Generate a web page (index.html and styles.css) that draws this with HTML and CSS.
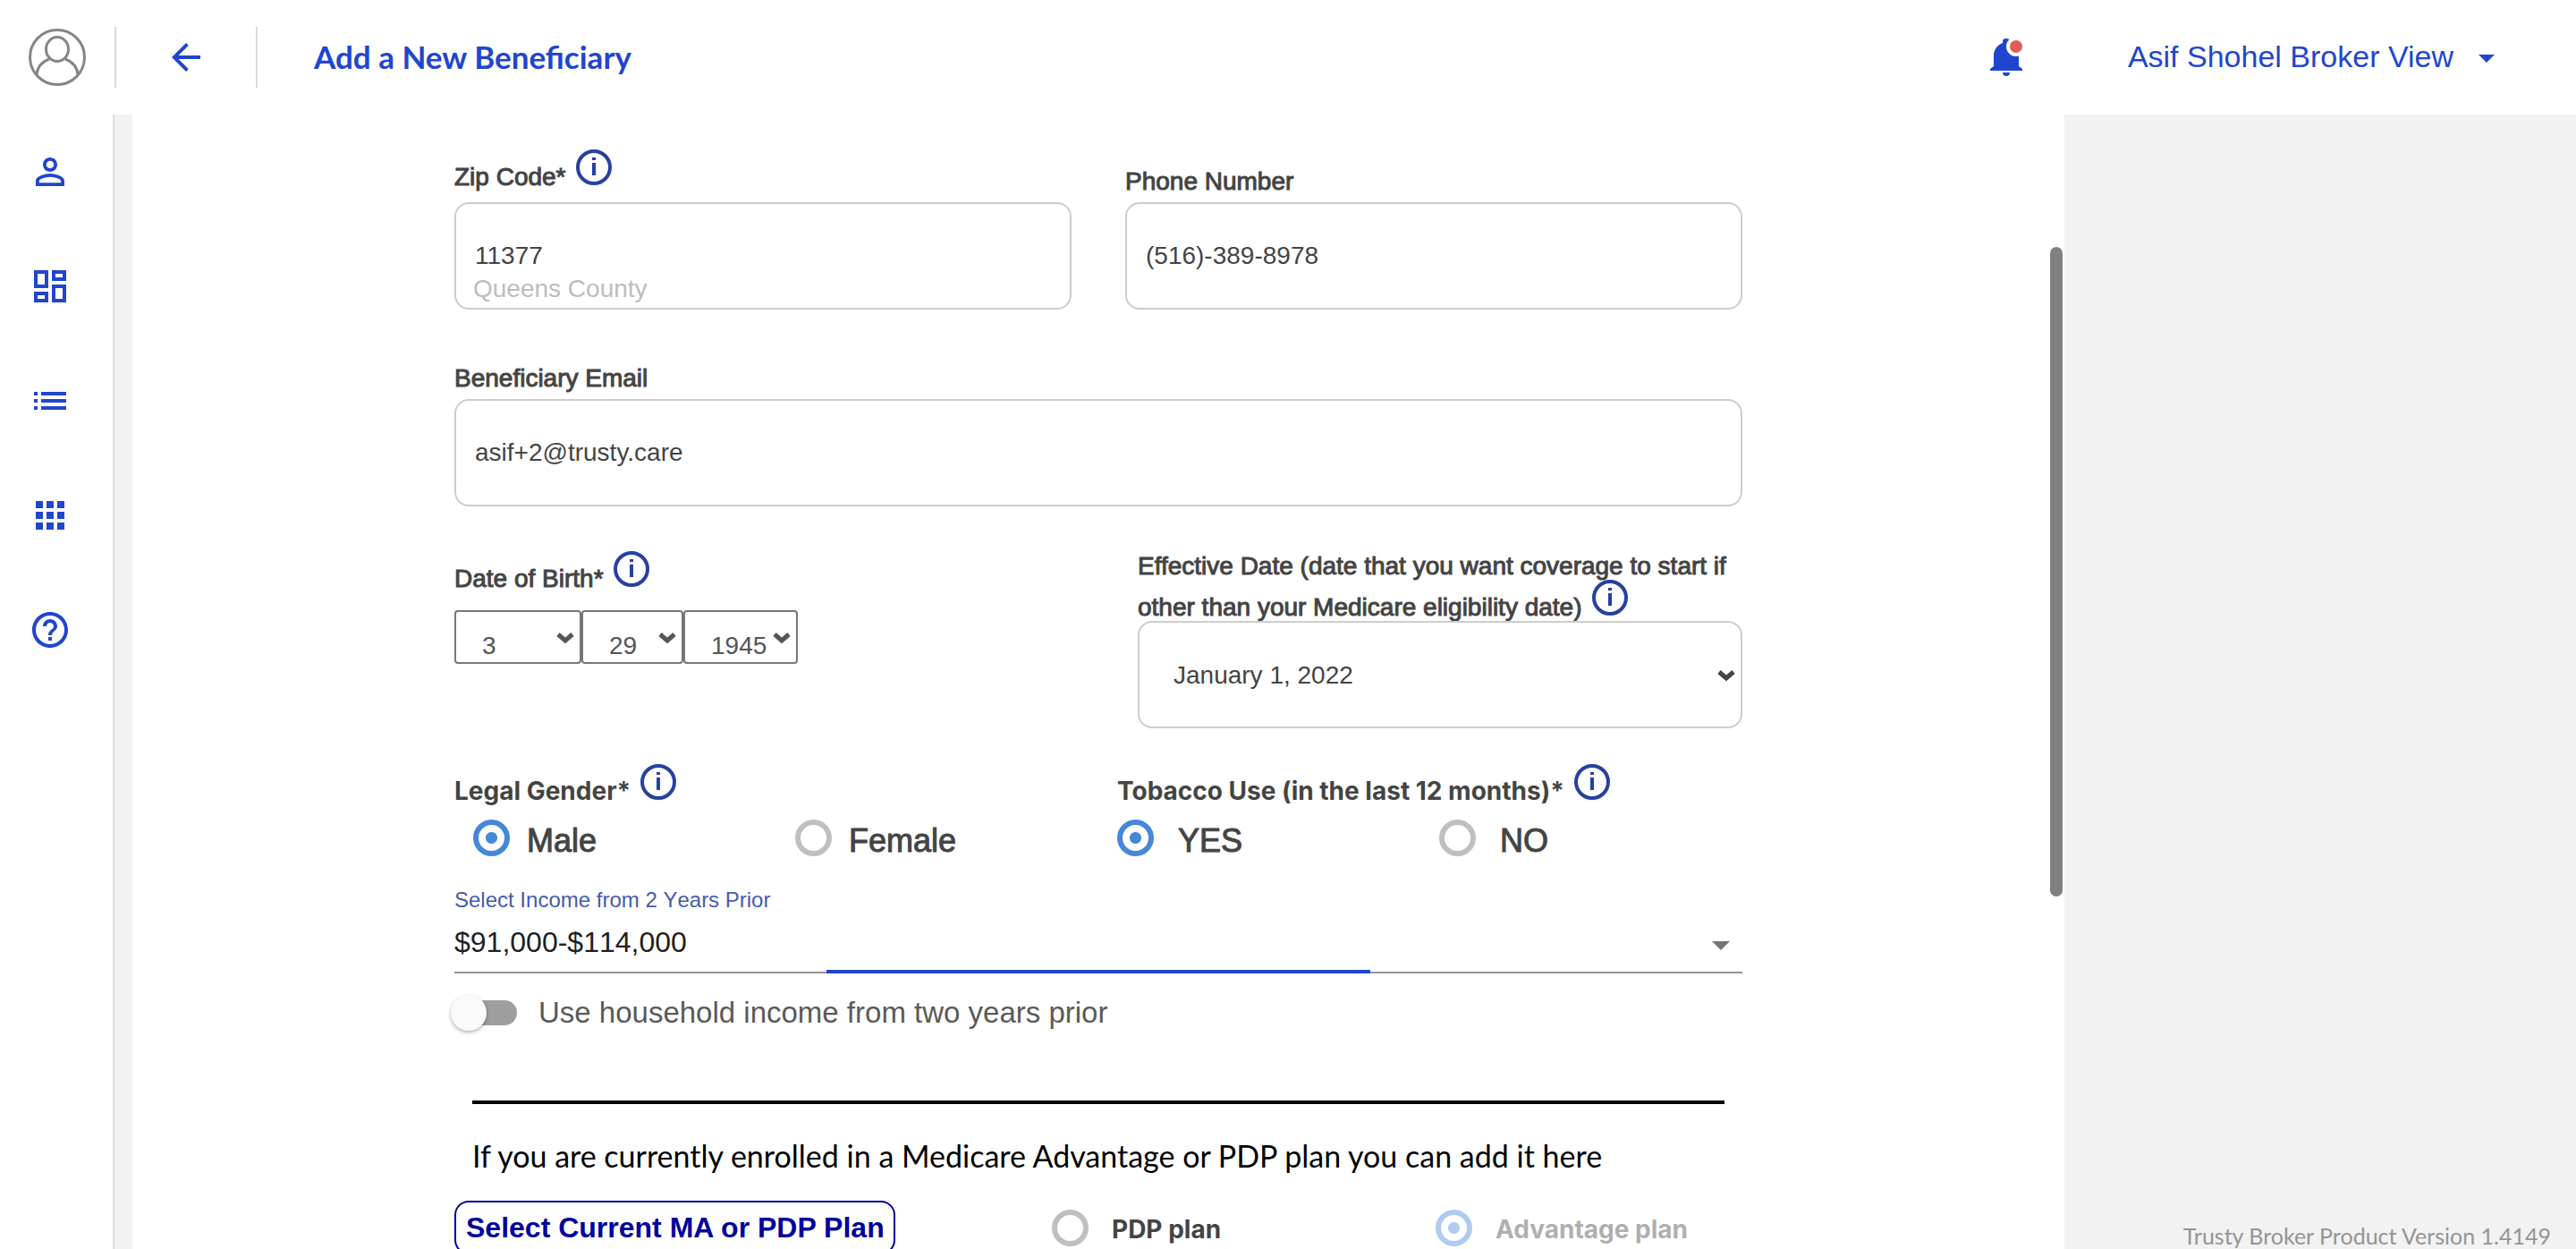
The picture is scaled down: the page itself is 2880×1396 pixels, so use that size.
FILE: index.html
```html
<!DOCTYPE html>
<html lang="en">
<head>
<meta charset="utf-8">
<meta name="viewport" content="width=device-width, initial-scale=1">
<title>Add a New Beneficiary</title>
<link rel="stylesheet" href="styles.css">
</head>
<body>
<svg class="sprite" aria-hidden="true">
  <symbol id="info" viewBox="0 0 48 48">
    <circle cx="24" cy="24" r="18" fill="none" stroke="#26419e" stroke-width="4"/>
    <rect x="22" y="13" width="4" height="3" fill="#26419e"/>
    <rect x="22" y="19" width="4" height="14" fill="#26419e"/>
  </symbol>
  <symbol id="chevron" viewBox="0 0 20 12">
    <path d="M2 2l8 7 8-7" fill="none" stroke="currentColor" stroke-width="5"/>
  </symbol>
</svg>
<div class="app">
  <header class="header">
    <svg class="avatar" viewBox="0 0 64 64" fill="none" stroke="#858585" stroke-width="3">
      <circle cx="32" cy="32" r="30.500"/>
      <ellipse cx="32" cy="23" rx="12.500" ry="13.500"/>
      <path d="M9 51C10 43 15 37 23 34M55 51C54 43 49 37 41 34"/>
    </svg>
    <span class="divider"></span>
    <button class="icon-button back" type="button" aria-label="Back">
      <svg class="icon" viewBox="0 0 24 24"><path d="M20 11H7.83l5.59-5.59L12 4l-8 8 8 8 1.41-1.41L7.83 13H20v-2z"/></svg>
    </button>
    <span class="divider"></span>
    <h1 class="title">Add a New Beneficiary</h1>
    <button class="icon-button bell" type="button" aria-label="Notifications">
      <svg class="bell-icon" viewBox="0 0 36 42">
        <path fill="#2046cf" d="M14 5V3a4 3 0 0 1 8 0v2c6 2 10 8 10 14v12l4 3v2H0v-2l4-3V19C4 13 8 7 14 5zM14 38h8a4 4 0 0 1-8 0z"/>
        <circle cx="29" cy="9" r="11" fill="#fff"/>
        <circle cx="29" cy="9" r="7" fill="#e05d57"/>
      </svg>
    </button>
    <button class="account" type="button">
      <span>Asif Shohel Broker View</span>
      <svg class="caret" viewBox="0 0 18 9"><path d="M0 0h18l-9 9z"/></svg>
    </button>
  </header>

  <nav class="sidebar" aria-label="Main">
    <a href="#profile" aria-label="Profile"><svg class="icon" viewBox="0 0 24 24"><path d="M12 5.9c1.16 0 2.1.94 2.1 2.1s-.94 2.1-2.1 2.1S9.900 9.160 9.900 8s.94-2.100 2.100-2.100m0 9c2.970 0 6.100 1.460 6.100 2.100v1.100H5.900V17c0-.64 3.130-2.100 6.100-2.100M12 4C9.790 4 8 5.790 8 8s1.790 4 4 4 4-1.790 4-4-1.790-4-4-4zm0 9c-2.670 0-8 1.340-8 4v3h16v-3c0-2.660-5.330-4-8-4z"/></svg></a>
    <a href="#dashboard" aria-label="Dashboard"><svg class="icon" viewBox="0 0 24 24"><path d="M19 5v2h-4V5h4M9 5v6H5V5h4m10 8v6h-4v-6h4M9 17v2H5v-2h4M21 3h-8v6h8V3zM11 3H3v10h8V3zm10 8h-8v10h8V11zm-10 4H3v6h8v-6z"/></svg></a>
    <a href="#list" aria-label="List"><svg class="icon" viewBox="0 0 24 24"><path d="M3 13h2v-2H3v2zm0 4h2v-2H3v2zm0-8h2V7H3v2zm4 4h14v-2H7v2zm0 4h14v-2H7v2zM7 7v2h14V7H7z"/></svg></a>
    <a href="#apps" aria-label="Apps"><svg class="icon" viewBox="0 0 24 24"><path d="M4 8h4V4H4v4zm6 12h4v-4h-4v4zm-6 0h4v-4H4v4zm0-6h4v-4H4v4zm6 0h4v-4h-4v4zm6-10v4h4V4h-4zm-6 4h4V4h-4v4zm6 6h4v-4h-4v4zm0 6h4v-4h-4v4z"/></svg></a>
    <a href="#help" aria-label="Help"><svg class="icon" viewBox="0 0 24 24"><path d="M11 18h2v-2h-2v2zm1-16C6.480 2 2 6.480 2 12s4.480 10 10 10 10-4.480 10-10S17.520 2 12 2zm0 18c-4.410 0-8-3.590-8-8s3.590-8 8-8 8 3.590 8 8-3.590 8-8 8zm0-14c-2.210 0-4 1.790-4 4h2c0-1.100.9-2 2-2s2 .9 2 2c0 2-3 1.750-3 5h2c0-2.250 3-2.500 3-5 0-2.210-1.790-4-4-4z"/></svg></a>
  </nav>

  <main class="panel">
    <form class="form">
      <div class="row contact">
        <div class="field">
          <label class="label zip-label" for="zip">Zip Code* <svg class="info"><use href="#info"/></svg></label>
          <div class="overlay">
            <input class="input" id="zip" type="text" value="11377">
            <span class="hint">Queens County</span>
          </div>
        </div>
        <div class="field">
          <label class="label" for="phone">Phone Number</label>
          <input class="input" id="phone" type="tel" value="(516)-389-8978">
        </div>
      </div>

      <div class="field email">
        <label class="label" for="email">Beneficiary Email</label>
        <input class="input" id="email" type="email" value="asif+2@trusty.care">
      </div>

      <div class="row dates">
        <div class="field birth">
          <label class="label" for="month">Date of Birth* <svg class="info"><use href="#info"/></svg></label>
          <div class="birth-selects">
            <span class="select-box month"><select class="small-select" id="month"><option>3</option></select><svg class="chevron"><use href="#chevron"/></svg></span>
            <span class="select-box day"><select class="small-select" aria-label="Day"><option>29</option></select><svg class="chevron"><use href="#chevron"/></svg></span>
            <span class="select-box year"><select class="small-select" aria-label="Year"><option>1945</option></select><svg class="chevron"><use href="#chevron"/></svg></span>
          </div>
        </div>
        <div class="field effective">
          <label class="label effective-label" for="effective">Effective Date (date that you want coverage to start if other than your Medicare eligibility date) <svg class="info"><use href="#info"/></svg></label>
          <span class="select-box large"><select class="input date-select" id="effective"><option>January 1, 2022</option></select><svg class="chevron"><use href="#chevron"/></svg></span>
        </div>
      </div>

      <div class="row choices">
        <div class="choice" role="radiogroup" aria-labelledby="gender-label">
          <div class="group-label" id="gender-label">Legal Gender* <svg class="info"><use href="#info"/></svg></div>
          <div class="options">
            <label class="option"><input class="radio" type="radio" name="gender" checked><span>Male</span></label>
            <label class="option"><input class="radio" type="radio" name="gender"><span>Female</span></label>
          </div>
        </div>
        <div class="choice tobacco" role="radiogroup" aria-labelledby="tobacco-label">
          <div class="group-label" id="tobacco-label">Tobacco Use (in the last 12 months)* <svg class="info"><use href="#info"/></svg></div>
          <div class="options">
            <label class="option"><input class="radio" type="radio" name="tobacco" checked><span>YES</span></label>
            <label class="option"><input class="radio" type="radio" name="tobacco"><span>NO</span></label>
          </div>
        </div>
      </div>

      <div class="income">
        <label class="income-label" for="income">Select Income from 2 Years Prior</label>
        <div class="income-box">
          <select class="income-select" id="income"><option>$91,000-$114,000</option></select>
          <svg class="income-caret" viewBox="0 0 20 10"><path d="M0 0h20l-10 10z"/></svg>
          <span class="ripple"></span>
        </div>
      </div>

      <label class="household"><input class="switch" type="checkbox" role="switch"><span>Use household income from two years prior</span></label>

      <hr class="rule">
      <p class="enrolled">If you are currently enrolled in a Medicare Advantage or PDP plan you can add it here</p>

      <div class="plans">
        <button class="plan-button" type="button">Select Current MA or PDP Plan</button>
        <label class="plan"><input class="radio" type="radio" name="plan"><span class="plan-name">PDP plan</span></label>
        <label class="plan off"><input class="radio" type="radio" name="plan" checked disabled><span class="plan-name">Advantage plan</span></label>
      </div>
    </form>
    <div class="scroll-thumb"></div>
  </main>

  <aside class="aside"><p class="version">Trusty Broker Product Version 1.4149</p></aside>
</div>
</body>
</html>
```
FILE: styles.css
```css
*, *::before, *::after { box-sizing: border-box; }

body {
  margin: 0;
  background: #f2f2f2;
  color: #444;
  font-family: "Liberation Sans", Arial, sans-serif;
  font-size: 28px;
}

.sprite { position: absolute; width: 0; height: 0; }
button, input, select { font: inherit; color: inherit; }
svg { display: block; }

.app {
  display: grid;
  grid-template: 128px minmax(0, 1fr) / 128px 75% minmax(0, 1fr);
  column-gap: 20px;
  height: 100vh;
  overflow: hidden;
}

/* Header */
.header {
  grid-column: 1 / -1;
  display: flex;
  align-items: center;
  padding: 0 91px 0 32px;
  background: #fff;
  color: #2046cf;
}
.avatar { width: 64px; height: 64px; margin-right: 32px; }
.divider { width: 2px; height: 68px; background: #d9d9d9; }
.icon { width: 48px; height: 48px; fill: #2046cf; }
.icon-button { padding: 0; border: 0; background: none; }
.back { margin: 0 54px; }
.title {
  margin: 0 auto 0 63px;
  padding-bottom: 2px;
  font: 700 35px/44px Lato, sans-serif;
}
.bell { margin-right: 118px; }
.bell-icon { width: 36px; height: 42px; }
.account {
  display: flex;
  align-items: center;
  gap: 28px;
  padding: 0 0 2px;
  border: 0;
  background: none;
  font-size: 34px;
}
.caret { width: 18px; height: 9px; margin-top: 4px; fill: #2046cf; }

/* Sidebar */
.sidebar {
  display: flex;
  flex-direction: column;
  gap: 80px;
  padding: 40px 30px 0 32px;
  border-right: 2px solid #dedede;
  background: #fff;
}

/* Form panel */
.panel {
  position: relative;
  display: grid;
  grid-template-columns: 1fr 4fr 1fr;
  overflow: hidden;
  background: #fff;
}
.scroll-thumb {
  position: absolute;
  top: 148px;
  right: 2px;
  width: 14px;
  height: 726px;
  border-radius: 7px;
  background: #808080;
}
.form { grid-column: 2; padding-top: 47px; }
.row { display: grid; grid-template-columns: 1fr 1fr; }
.field { display: flex; flex-direction: column; }

.label {
  line-height: 46px;
  -webkit-text-stroke: 1px #444;
}
.info {
  display: inline-block;
  width: 48px;
  height: 48px;
  margin: -20px 0 -4px;
  vertical-align: 0;
}
.input {
  width: 100%;
  height: 120px;
  padding: 0 21px;
  border: 2px solid #ccc;
  border-radius: 16px;
  background: #fff;
}

.contact { column-gap: 60px; align-items: end; }
.zip-label { margin-bottom: 5px; }
.overlay { position: relative; }
.hint {
  position: absolute;
  left: 21px;
  bottom: 7px;
  line-height: 32px;
  color: #bdbdbd;
}

.email { margin-top: 54px; }

.dates { margin-top: 44px; }
.birth { padding-top: 14px; }
.birth-selects { display: flex; margin-top: 12px; }
.select-box { position: relative; }
.chevron {
  position: absolute;
  top: 25px;
  right: 8px;
  width: 20px;
  height: 12px;
  color: #555;
  pointer-events: none;
}
.small-select {
  width: 100%;
  height: 60px;
  padding: 18px 0 0 29px;
  border: 2px solid #767676;
  border-radius: 4px;
  background: #fff;
  color: #555;
  appearance: none;
}
.month { width: 142px; }
.day { width: 114px; }
.year { width: 128px; }

.effective { padding-left: 44px; }
.effective-label { margin-bottom: -8px; }
.date-select { display: block; padding: 0 38px; appearance: none; background: #fff; }
.large .chevron { top: 55px; color: #444; }

/* Radio groups */
.choices { margin-top: 47px; }
.group-label { font: 700 28px/46px Inter, sans-serif; }
.tobacco .group-label { padding-left: 21px; }
.options {
  display: grid;
  grid-template-columns: 1fr 1fr;
  margin-top: 9px;
  padding-left: 21px;
  margin-right: -21px;
}
.option {
  display: flex;
  gap: 19px;
  font-size: 36px;
  line-height: 48px;
  -webkit-text-stroke: 1px #444;
}
.tobacco .option { gap: 27px; }
.radio {
  flex: none;
  width: 41px;
  height: 41px;
  margin: 0;
  border: 6px solid #bfbfbf;
  border-radius: 50%;
  background: #fff;
  appearance: none;
}
.radio:checked {
  border-color: #4388d9;
  background: radial-gradient(circle, #4388d9 6px, #fff 7px);
}
.radio:disabled {
  border-color: #aeccef;
  background: radial-gradient(circle, #aeccef 6px, #fff 7px);
}

/* Income */
.income { margin-top: 28px; font-kerning: none; }
.income-label {
  display: block;
  font-size: 24px;
  line-height: 28px;
  color: #455bac;
}
.income-box { position: relative; }
.income-select {
  display: block;
  width: 100%;
  height: 68px;
  padding: 0;
  border: 0;
  border-bottom: 2px solid #949494;
  background: none;
  color: #212121;
  font-size: 32px;
  font-kerning: none;
  appearance: none;
}
.income-caret {
  position: absolute;
  top: 32px;
  right: 14px;
  width: 20px;
  height: 10px;
  fill: #757575;
  pointer-events: none;
}
.ripple {
  position: absolute;
  bottom: 0;
  left: 28.9%;
  right: 28.9%;
  height: 4px;
  background: #2046cf;
}

.household {
  display: flex;
  align-items: center;
  gap: 24px;
  margin-top: 20px;
  font-size: 33px;
  line-height: 48px;
  color: #5a5a5a;
}
.switch {
  position: relative;
  width: 70px;
  height: 28px;
  margin: 0;
  border-radius: 14px;
  background: #9e9e9e;
  appearance: none;
}
.switch::before {
  content: "";
  position: absolute;
  top: -6px;
  left: -4px;
  width: 40px;
  height: 40px;
  border-radius: 50%;
  background: #fafafa;
  box-shadow: 0 2px 4px rgba(0, 0, 0, .3);
}

.rule {
  height: 4px;
  margin: 74px 20px 0;
  border: 0;
  background: #000;
}
.enrolled {
  margin: 38px 20px 0;
  font: 400 34px/40px Lato, sans-serif;
  color: #000;
}

.plans {
  display: grid;
  grid-template-columns: 668fr 429fr 343fr;
  align-items: center;
  margin-top: 30px;
}
.plan-button {
  justify-self: start;
  height: 60px;
  padding: 0 10px 0 11px;
  border: 2px solid #00009c;
  border-radius: 16px;
  background: #fff;
  color: #00009c;
  font-size: 32px;
  font-weight: 700;
}
.plan {
  display: flex;
  align-items: center;
  gap: 26px;
  font: 700 28px/40px Inter, sans-serif;
}
.plan-name { padding-top: 3px; }
.off { color: #aeb0b0; }

/* Right side */
.aside { display: flex; justify-content: flex-end; align-items: flex-end; padding-right: 28px; }
.version { margin: 0; font: 25px/30px Lato, sans-serif; color: #949494; }
```
